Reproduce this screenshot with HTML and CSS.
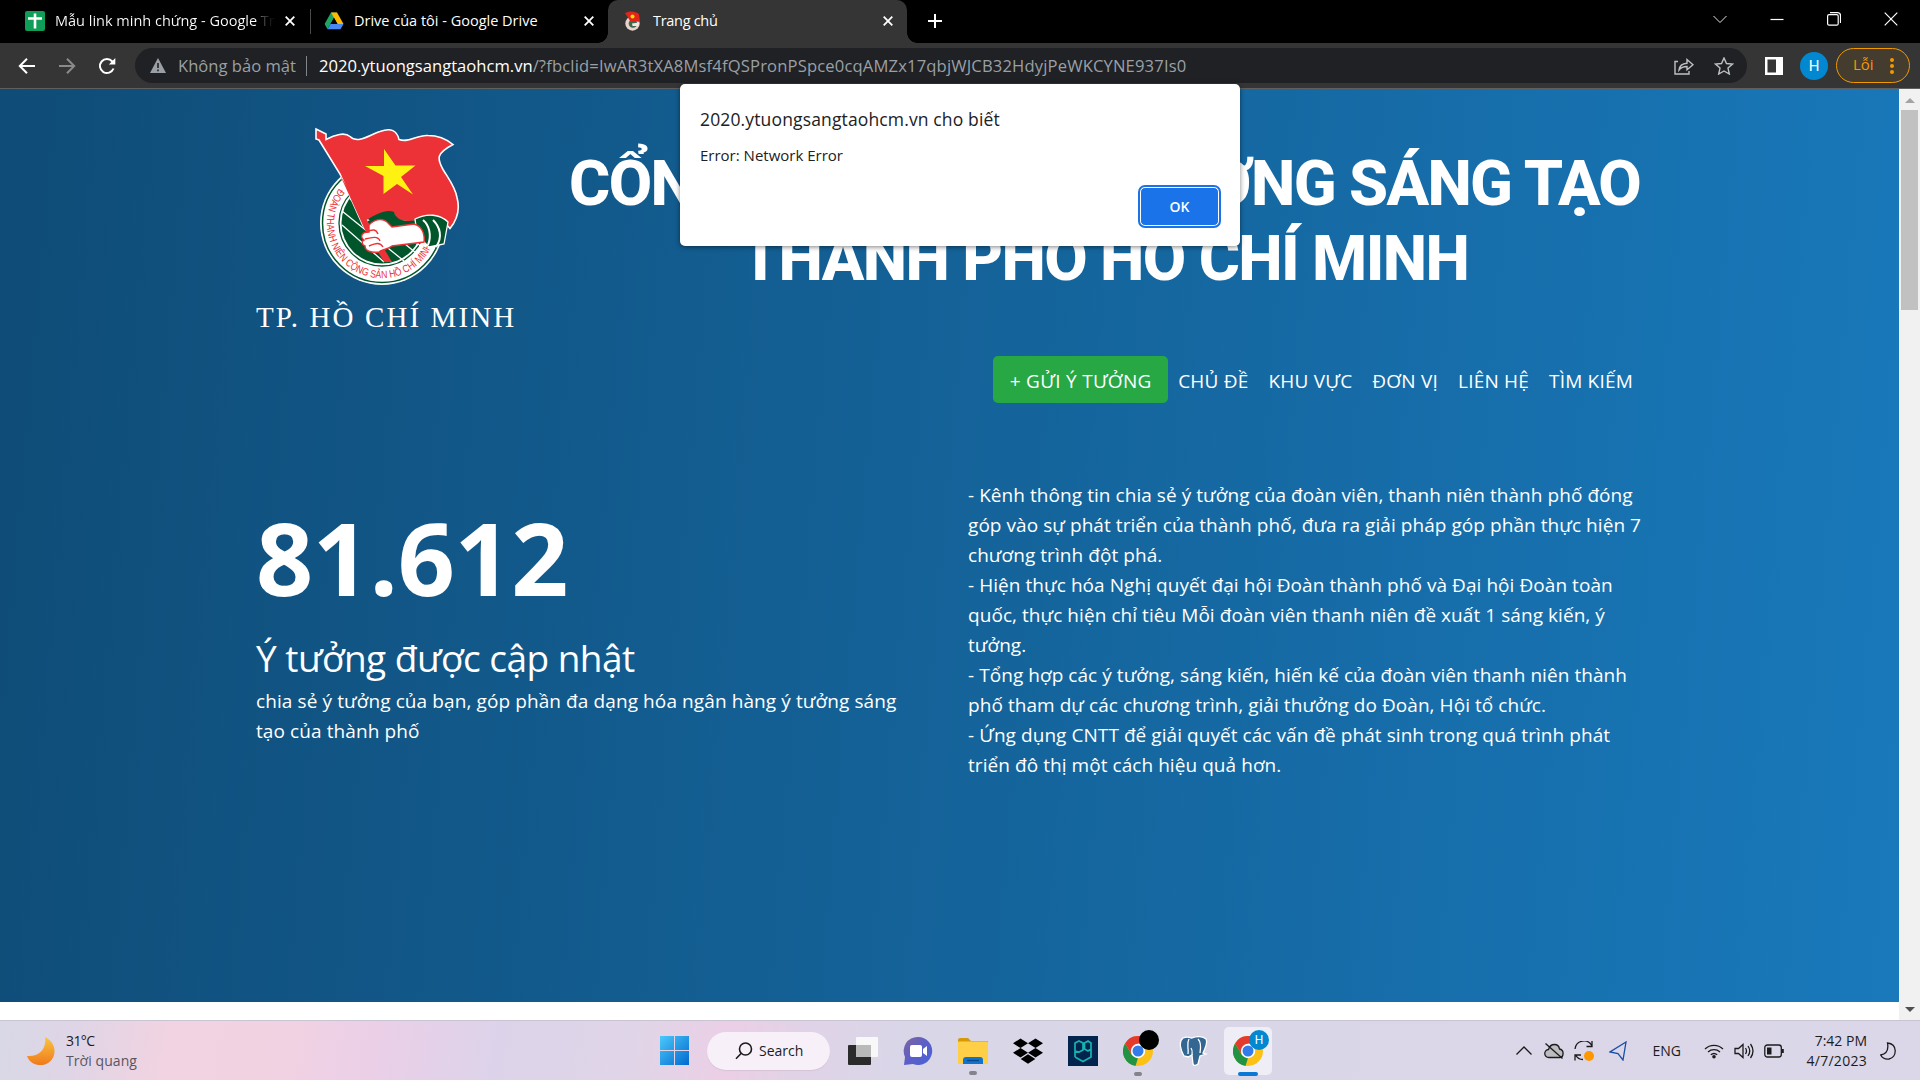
FILE: index.html
```
<!DOCTYPE html>
<html lang="vi">
<head>
<meta charset="utf-8">
<title>Trang chủ</title>
<link rel="stylesheet" href="styles.css">
</head>
<body>
<div class="screen">
  <div class="tabstrip">
    <div class="tab tab-first">
      <svg class="fav" viewBox="0 0 20 20"><rect width="20" height="20" rx="2" fill="#0f9d58"/><path d="M10 2.500v15M3 7.500h14" stroke="#fff" stroke-width="2.600"/></svg>
      <span class="tab-title fade">Mẫu link minh chứng - Google Tr</span>
      <svg class="x" viewBox="0 0 10 10"><path d="M.7.7l8.600 8.600M9.300.7L.7 9.300"/></svg>
    </div>
    <div class="tab tab-second">
      <svg class="fav" viewBox="0 0 20 20"><path d="M7 1.500h6L6.500 13 3.500 18.300.600 13z" fill="#1ea362"/><path d="M7 1.500h6L19.500 13h-6z" fill="#ffba00"/><path d="M6.500 13h13l-3 5.300h-13z" fill="#4688f4"/><path d="M10 7l3.400 6H6.600z" fill="#000"/></svg>
      <span class="tab-title">Drive của tôi - Google Drive</span>
      <svg class="x" viewBox="0 0 10 10"><path d="M.7.7l8.600 8.600M9.300.7L.7 9.300"/></svg>
    </div>
    <div class="tab tab-active">
      <svg class="fav" viewBox="0 0 20 20"><circle cx="9.500" cy="12.500" r="7.200" fill="#e9d3cd"/><circle cx="10" cy="12.500" r="4.300" fill="#3c6b4f"/><path d="M2 2C6-.5 13 0 16 3l1 8-5.500-1-4 .5z" fill="#e0261c"/><path d="M9 12.500l7-1-.5 3.500-6 0z" fill="#f7e6e0"/><circle cx="9.500" cy="5.500" r="2" fill="#ffd800"/></svg>
      <span class="tab-title tight">Trang chủ</span>
      <svg class="x" viewBox="0 0 10 10"><path d="M.7.7l8.600 8.600M9.300.7L.7 9.300"/></svg>
    </div>
    <svg class="newtab" viewBox="0 0 14 14"><path d="M7 0v14M0 7h14"/></svg>
    <div class="winctl">
      <svg class="thin" viewBox="0 0 14 14"><path d="M.5 4l6.500 6.500L13.500 4"/></svg>
      <svg viewBox="0 0 14 14"><path d="M.5 7.500h13"/></svg>
      <svg viewBox="0 0 14 14"><rect x=".6" y="2.600" width="10.600" height="10.600" rx="1.500"/><path d="M3 .7h7.500a3 3 0 0 1 3 3V11"/></svg>
      <svg viewBox="0 0 14 14"><path d="M.7.7l12.600 12.600M13.300.7L.7 13.300"/></svg>
    </div>
  </div>
  <div class="toolbar">
    <svg class="tb" viewBox="0 0 18 18"><path d="M17 9H2M9 1.800L1.800 9 9 16.200"/></svg>
    <svg class="tb dim" viewBox="0 0 18 18"><path d="M1 9h15M9 1.800L16.200 9 9 16.200"/></svg>
    <svg class="tb" viewBox="0 0 18 18"><path d="M15.500 11.500a7 7 0 1 1-1.200-7l1.500 1.800"/><path d="M17.300 1v6.500h-6.500z" fill="#fff" stroke="none"/></svg>
    <div class="omnibox">
      <svg class="warn" viewBox="0 0 16 15"><path d="M8 0l8 15H0z" fill="#9aa0a6"/><path d="M8 5v5M8 11.500v1.800" stroke="#202124" stroke-width="1.600"/></svg>
      <span>Không bảo mật</span>
      <i class="bar"></i>
      <span class="url"><b>2020.ytuongsangtaohcm.vn</b><span class="query">/?fbclid=IwAR3tXA8Msf4fQSPronPSpce0cqAMZx17qbjWJCB32HdyjPeWKCYNE937Is0</span></span>
      <svg class="ob" viewBox="0 0 20 18"><path d="M4 4.500H1V17h14v-3M5 13c.5-4 3-6.500 8-6.800V2.500L19 7.700l-6 5V9.500c-4 0-6 1-8 3.500z"/></svg>
      <svg class="ob" viewBox="0 0 20 18"><path d="M10 1l2.500 5.500 6 .6-4.500 4 1.300 5.900L10 14l-5.300 3L6 11.100l-4.500-4 6-.6z"/></svg>
    </div>
    <svg class="panel" viewBox="0 0 18 18"><rect width="18" height="18" fill="#fff"/><rect x="2.500" y="2.500" width="8.500" height="13" fill="#353535"/></svg>
    <span class="avatar">H</span>
    <span class="err"><span>Lỗi</span><i></i></span>
  </div>
  <div class="viewport">
    <main class="page">
      <section class="hero">
        <header class="head">
          <div class="logo">
            <svg class="emblem" viewBox="0 0 146 162">
              <circle cx="67" cy="96" r="62" fill="#fff"/>
              <circle cx="67" cy="96" r="59.500" fill="none" stroke="#00552b" stroke-width="1.500"/>
              <circle cx="67" cy="96" r="43" fill="none" stroke="#00552b" stroke-width="1.300"/>
              <circle cx="67" cy="96" r="40.500" fill="#00552b"/>
              <path d="M27 84l62 50M27 98l42 37M35 72l66 54M62 85l50 39M88 80l22 18" stroke="#fff" stroke-width="1.300"/>
              <path id="arc" d="M24.300 61.400A55 55 0 1 0 117.600 117.500" fill="none"/>
              <text class="ringtext"><textPath href="#arc" startOffset="0" textLength="187" lengthAdjust="spacingAndGlyphs">ĐOÀN THANH NIÊN CỘNG SẢN HỒ CHÍ MINH</textPath></text>
              <path d="M1 2l10 5v5.500c9-5 19-7.500 24-3 8 8 20-2 30-5 11-4 17-1 19 8 10 4 18-5 29-4 10 0 19 4 25 9-17 9-16 14-10 25 6 10 12 17 14 28 3 11 1 21-7 31-5-7-12-11-21-10-9 1-17 5-24 3-8 0-10-3-11-7-8-4-17 2-27 6l-2 6 6 10-8-11L25 47 4 13 1 12z" fill="#ec3237" stroke="#fff" stroke-width="1.600"/>
              <path d="M53 92c9-5 18-10 26-7 2 7 8 9 15 9l8-1v5l-21 3-22-4z" fill="#00552b"/>
              <path d="M69 22l11.500 16.500h20L86 50l12 17.500L82 57 68.500 67V49L50 39h19z" fill="#fff112"/>
              <path d="M25 48l52 87h-8L50 103z" fill="#ec3237"/>
              <path d="M100 92c12-6 25-5 33 3l-4 22-15 3-4-4-8-10z" fill="#00552b" stroke="#fff" stroke-width="1.300"/>
              <path d="M108 93c6 5 9 15 5 25M118 93c7 7 10 17 3 27" fill="none" stroke="#fff" stroke-width="2"/>
              <path d="M54 98c6-6 14-8 20-1l3 3 22-3c8 2 11 10 10 18l-32 4c-5 4-10 3-13 6-8 1-14-1-14-6-4-2-3-5-1-6-4-3-3-8 5-8z" fill="#fff" stroke="#ec3237" stroke-width="1.400"/>
              <path d="M51 105c7-3 10-3 12 2M50 112c8-2 13-3 15 2M54 119c7-3 11-4 14 1" fill="none" stroke="#ec3237" stroke-width="1.400"/>
            </svg>
            <div class="city">TP. HỒ CHÍ MINH</div>
          </div>
          <h1 class="title">CỔNG THÔNG TIN Ý TƯỞNG SÁNG TẠO<br>THÀNH PHỐ HỒ CHÍ MINH</h1>
        </header>
        <nav class="nav">
          <a class="send">+ GỬI Ý TƯỞNG</a>
          <a>CHỦ ĐỀ</a><a>KHU VỰC</a><a>ĐƠN VỊ</a><a>LIÊN HỆ</a><a>TÌM KIẾM</a>
        </nav>
        <div class="cols">
          <div class="stat">
            <div class="num">81.612</div>
            <h2>Ý tưởng được cập nhật</h2>
            <p>chia sẻ ý tưởng của bạn, góp phần đa dạng hóa ngân hàng ý tưởng sáng<br>tạo của thành phố</p>
          </div>
          <div class="about">- Kênh thông tin chia sẻ ý tưởng của đoàn viên, thanh niên thành phố đóng<br>góp vào sự phát triển của thành phố, đưa ra giải pháp góp phần thực hiện 7<br>chương trình đột phá.<br>- Hiện thực hóa Nghị quyết đại hội Đoàn thành phố và Đại hội Đoàn toàn<br>quốc, thực hiện chỉ tiêu Mỗi đoàn viên thanh niên đề xuất 1 sáng kiến, ý<br>tưởng.<br>- Tổng hợp các ý tưởng, sáng kiến, hiến kế của đoàn viên thanh niên thành<br>phố tham dự các chương trình, giải thưởng do Đoàn, Hội tổ chức.<br>- Ứng dụng CNTT để giải quyết các vấn đề phát sinh trong quá trình phát<br>triển đô thị một cách hiệu quả hơn.</div>
        </div>
      </section>
    </main>
    <div class="scroll"><i class="up"></i><i class="thumb"></i><i class="down"></i></div>
  </div>
  <footer class="taskbar">
    <div class="weather">
      <svg viewBox="0 0 28 28"><defs><linearGradient id="mn" x2="0" y2="1"><stop offset="0" stop-color="#f9c440"/><stop offset="1" stop-color="#f07a1c"/></linearGradient></defs><path d="M18 0c13 6 13 24-2 28C8 29 2 25 0 19 12 20 20 12 18 0z" fill="url(#mn)"/></svg>
      <div><div class="temp">31°C</div><div class="sub">Trời quang</div></div>
    </div>
    <div class="apps">
      <svg class="win" viewBox="0 0 29 29"><defs><linearGradient id="wg" x2="1" y2="1"><stop offset="0" stop-color="#4cc9fb"/><stop offset="1" stop-color="#0069cf"/></linearGradient></defs><path d="M0 0h14v14H0zM15 0h14v14H15zM0 15h14v14H0zM15 15h14v14H15z" fill="url(#wg)"/></svg>
      <div class="search"><svg viewBox="0 0 18 18"><circle cx="10.500" cy="7" r="6" /><path d="M6.300 11.300L1 16.800"/></svg><span>Search</span></div>
      <svg class="app" viewBox="0 0 30 28"><rect y="8" width="23" height="20" rx="1" fill="#2b2b2b"/><rect x="8" width="22" height="20" rx="1" fill="#f8f8f8"/><rect x="8" y="8" width="15" height="12" fill="#b8b9b8"/></svg>
      <svg class="app" viewBox="0 0 30 28"><defs><linearGradient id="ch" x2="1" y2="1"><stop offset="0" stop-color="#80659f"/><stop offset=".5" stop-color="#5b5fc7"/><stop offset="1" stop-color="#4a62d8"/></linearGradient></defs><path d="M15 0a14 14 0 1 1-5 27l-9 1 1-8A14 14 0 0 1 15 0z" fill="url(#ch)"/><rect x="7" y="8" width="12" height="12" rx="2" fill="#fff"/><path d="M20 12l4-3v10l-4-3z" fill="#fff"/></svg>
      <div class="slot"><svg class="app" viewBox="0 0 30 28"><path d="M0 3q0-2 2-2h8l3 3h17v22H0z" fill="#d59a05"/><rect y="4.500" width="30" height="22.500" rx="1" fill="#ffcf48"/><path d="M5 27v-4q0-3 3-3h14q3 0 3 3v4z" fill="#1173cb"/><path d="M9 23.500h12" stroke="#0a4a8a" stroke-width="1.500"/></svg><i class="run"></i></div>
      <svg class="app" viewBox="0 0 30 28"><path d="M7.500 1.500l7.500 4.800-7.500 4.800L0 6.300zM22.500 1.500L30 6.300l-7.500 4.800L15 6.300zM7.500 11l7.500 4.800-7.500 4.800L0 15.800zM22.500 11l7.500 4.800-7.500 4.800-7.500-4.800zM15 17.300l7.300 4.700-7.300 4.700L7.700 22z"/></svg>
      <svg class="app pg" viewBox="0 0 30 30"><rect width="30" height="30" fill="#03244d"/><path d="M7 21V7l4-2 4 2v7l-4 2-4-1M23 13l-3 2-3.500-2V7L20 5l3 2v14l-8 4.500L7 21" fill="none" stroke="#16b3b3" stroke-width="1.700"/></svg>
      <div class="slot"><svg class="app pg" viewBox="0 0 30 30"><circle cx="15" cy="15" r="15" fill="#fbc116"/><path d="M2 7.500L9 19l6 3-2.500 8A15 15 0 0 1 2 7.500z" fill="#229342"/><path d="M2 7.500A15 15 0 0 1 28 7.500H15L9 19z" fill="#e33b2e"/><circle cx="15" cy="15" r="7.200" fill="#fff"/><circle cx="15" cy="15" r="5.500" fill="#327bea"/></svg><b class="badge black"></b><i class="run"></i></div>
      <svg class="app pg" viewBox="0 0 30 30"><path d="M5 2c5-2 8 0 9 0 5-2 11-2 14 1 2 4-1 10-3 14l3 1-6 2-2 8q-4 3-5 0l-1-9-4 2-4-1C3 15 0 6 5 2z" fill="#336791" stroke="#fff" stroke-width="1.300"/><path d="M11 3c-3 5 0 8-1 15M20 3c3 3 3 8 2 14M13 12c2 3 1 5 1 7" fill="none" stroke="#fff" stroke-width="1.300"/></svg>
      <div class="slot active"><svg class="app pg" viewBox="0 0 30 30"><circle cx="15" cy="15" r="15" fill="#fbc116"/><path d="M2 7.500L9 19l6 3-2.500 8A15 15 0 0 1 2 7.500z" fill="#229342"/><path d="M2 7.500A15 15 0 0 1 28 7.500H15L9 19z" fill="#e33b2e"/><circle cx="15" cy="15" r="7.200" fill="#fff"/><circle cx="15" cy="15" r="5.500" fill="#327bea"/></svg><b class="badge">H</b><i class="run on"></i></div>
    </div>
    <div class="tray">
      <svg class="t1" viewBox="0 0 16 9"><path d="M.5 8.500L8 1l7.500 7.500"/></svg>
      <svg class="t2" viewBox="0 0 20 16"><path d="M5 14.500a4 4 0 0 1-.5-8C5.500 3 8 1.500 10.500 1.500S15 3 15.500 6c5 1 4.500 8.500 0 8.500z" fill="#bdbdc0"/><path d="M1.500.500l17 15"/></svg>
      <svg class="t3" viewBox="0 0 20 20"><path d="M1 8a9 9 0 0 1 17-3M18 0v5.500h-5.500M9 18.500q-5 0-7.500-4.500M1 19.500V14h6"/><circle cx="15" cy="15" r="5" fill="#ff9800" stroke="none"/></svg>
      <svg class="t4" viewBox="0 0 18 20"><path d="M17 1L1 11l8 1.500 5 6.500z"/></svg>
      <span>ENG</span>
      <svg class="t5" viewBox="0 0 20 16"><path d="M1 6a13 13 0 0 1 18 0M4 9a9 9 0 0 1 12 0M6.800 11.800a5 5 0 0 1 6.400 0"/><circle cx="10" cy="13.700" r="1.800" fill="#1b1b1b" stroke="none"/></svg>
      <svg class="t6" viewBox="0 0 20 16"><path d="M1 5.500v5h3.500L9 14.500v-13L4.500 5.500zM11.500 5q2 3 0 6M14 3q3.500 5 0 10M16.500 1q5 7 0 14"/></svg>
      <svg class="t7" viewBox="0 0 20 14"><rect x=".8" y="1" width="16.500" height="12" rx="2.500"/><path d="M3 3.500h4.500v7H3z" fill="#1b1b1b" stroke="none"/><path d="M18.800 5v4" stroke-width="2"/></svg>
      <div class="clock"><div>7:42 PM</div><div class="date">4/7/2023</div></div>
      <svg class="t8" viewBox="0 0 16 18"><path d="M7.500 1c10 1 10 14 1.500 16-4 .5-7-1.500-8.300-4C6 12 9 9 7.500 1z"/></svg>
    </div>
  </footer>
  <div class="dialog" role="dialog">
    <div class="d-title">2020.ytuongsangtaohcm.vn cho biết</div>
    <div class="d-msg">Error: Network Error</div>
    <button class="ok">OK</button>
  </div>
</div>
</body>
</html>
```
FILE: styles.css
```
* { box-sizing: border-box; }
body { margin: 0; font-family: "Open Sans", "Noto Sans", sans-serif; }
svg { display: block; fill: none; flex: none; }
.screen { position: relative; width: 1920px; height: 1080px; display: flex; flex-direction: column; overflow: hidden; }

.tabstrip { height: 43px; background: #000; display: flex; align-items: center; color: #fff; font-size: 14.5px; flex: none; }
.tab { display: flex; align-items: center; height: 43px; padding-bottom: 2px; white-space: nowrap; }
.tab-first { width: 310px; padding-left: 25px; padding-right: 15px; }
.tab-second { width: 298px; padding-left: 14px; padding-right: 14px; position: relative; }
.tab-second::before { content: ""; position: absolute; left: 0; top: 9px; width: 1px; height: 25px; background: #4a4a4a; }
.tab-active { position: relative; width: 299px; padding-left: 15px; padding-right: 14px; background: #353535; border-radius: 10px 10px 0 0; }
.tab-active::before, .tab-active::after { content: ""; position: absolute; bottom: 0; width: 10px; height: 10px; }
.tab-active::before { left: -10px; background: radial-gradient(circle at 0 0, #000 9.5px, #353535 10px); }
.tab-active::after { right: -10px; background: radial-gradient(circle at 100% 0, #000 9.5px, #353535 10px); }
.fav { width: 20px; height: 20px; margin-right: 10px; }
.tab-title { flex: 1; min-width: 0; }
.tight { letter-spacing: -.3px; }
.fade { background: linear-gradient(90deg, #fff 202px, #555 207px, #111 217px); -webkit-background-clip: text; background-clip: text; color: transparent; }
.x { width: 10px; height: 10px; stroke: #fff; stroke-width: 1.8; }
.newtab { width: 14px; height: 14px; margin: 0 0 2px 21px; stroke: #fff; stroke-width: 2; }
.winctl { margin-left: auto; display: flex; gap: 43px; padding: 0 22px 6px 0; }
.winctl svg { width: 14px; height: 14px; stroke: #fff; stroke-width: 1.2; }
.winctl .thin { stroke-width: .9; }

.toolbar { height: 46px; background: #353535; border-bottom: 1px solid #5f5f5f; display: flex; align-items: center; padding: 0 10px 0 18px; flex: none; }
.tb { width: 18px; height: 18px; margin-right: 22px; stroke: #fff; stroke-width: 2; }
.tb.dim { stroke: #8a8a8a; }
.omnibox { margin-left: -3px; width: 1612px; height: 35px; border-radius: 18px; background: #202124; display: flex; align-items: center; padding: 0 13px 0 15px; color: #9aa0a6; font-size: 16.6px; white-space: nowrap; }
.warn { width: 16px; height: 15px; margin-right: 12px; }
.bar { width: 1px; height: 20px; background: #80868b; margin: 0 12px 0 10px; }
.url b { font-weight: 400; color: #fff; }
.url { flex: 1; }
.query { letter-spacing: .15px; }
.ob { width: 20px; height: 18px; margin-left: 20px; stroke: #bdc1c6; stroke-width: 1.4; }
.panel { width: 18px; height: 18px; margin-left: 18px; }
.avatar { width: 28px; height: 28px; border-radius: 50%; background: #0288d1; color: #fff; font: 15px/28px Roboto, sans-serif; text-align: center; margin-left: 17px; }
.err { width: 74px; height: 35px; margin-left: 8px; border: 1.5px solid #f29900; border-radius: 18px; background: #453c30; color: #f29900; font: 15px/30px "Open Sans", sans-serif; display: flex; align-items: center; justify-content: space-between; padding: 0 15px 3px 16px; }
.err i { width: 4px; height: 4px; margin-top: 3px; border-radius: 50%; background: #f29900; box-shadow: 0 -6px #f29900, 0 6px #f29900; }

.viewport { height: 931px; display: flex; flex: none; }
.page { flex: 1; min-width: 0; background: #fff; }
.hero { height: 913px; background: linear-gradient(95deg, #0f4c77, #1979bb); color: #fff; padding: 38px 259px 0 256px; }
.head { display: flex; height: 229px; }
.logo { width: 313px; flex: none; }
.emblem { width: 146px; height: 162px; margin-left: 59px; }
.ringtext { font: 10.5px "Liberation Sans", sans-serif; fill: #ec3237; }
.city { font: 29px/36px "Liberation Serif", serif; white-space: nowrap; letter-spacing: 2.1px; margin-top: 10px; }
.title { margin: 19px 0 0; flex: 1; min-width: 0; text-align: center; font: 800 63px/75px Roboto, sans-serif; letter-spacing: -1.65px; white-space: nowrap; }
.nav { display: flex; justify-content: flex-end; align-items: center; height: 47px; gap: 20px; font-size: 19px; letter-spacing: .2px; white-space: nowrap; padding: 0 7px 0 0; }
.nav a { line-height: 47px; padding-top: 4px; }
.nav .send { height: 47px; width: 175px; padding-top: 2px; letter-spacing: .3px; text-align: center; background: #28a745; border-radius: 5px; margin-right: -10px; }
.cols { display: flex; justify-content: space-between; font-size: 19px; letter-spacing: .1px; line-height: 30px; white-space: nowrap; padding-top: 77px; }
.num { font-size: 100px; font-weight: 700; line-height: 120px; padding-top: 17px; letter-spacing: -.4px; }
h2 { margin: 17px 0 0; font-size: 37px; font-weight: 400; line-height: 48px; letter-spacing: -.53px; }
.stat p { margin: 4px 0 0; }
.about { width: 672px; letter-spacing: .06px; }
.scroll { width: 21px; background: #f1f1f1; display: flex; flex-direction: column; align-items: center; padding: 9px 0 8px; }
.scroll .up { border: 5px solid transparent; border-top: 0; border-bottom-color: #a3a3a3; }
.scroll .thumb { width: 17px; height: 200px; background: #c1c1c1; margin-top: 7px; }
.scroll .down { border: 5px solid transparent; border-bottom: 0; border-top-color: #505050; margin-top: auto; }

.taskbar { height: 60px; display: flex; align-items: center; border-top: 1px solid #c9c4d3; background: linear-gradient(100deg, #d8d8e6 0, #dfd5e6 4%, #f2d3e1 9%, #f1d2e2 15%, #eacfe8 20%, #dcd3ea 26%, #e0d5e8 33%, #ebcfe6 38%, #e0d3e7 42%, #d9d6e8 47%, #dbd7e8 100%); color: #1b1b1b; font-size: 14px; line-height: 20px; }
.weather { display: flex; width: 660px; padding-left: 27px; gap: 11px; align-items: center; }
.weather svg { width: 28px; height: 28px; }
.temp { letter-spacing: -.6px; }
.sub { color: #5a5560; letter-spacing: .07px; }
.apps { display: flex; align-items: center; }
.win { width: 29px; height: 29px; }
.search { width: 123px; height: 38px; margin-left: 18px; border-radius: 19px; background: #f7f0f8; display: flex; align-items: center; padding-left: 28px; gap: 6px; margin-right: 18px; box-shadow: 0 1px 1px #d5c3d5; }
.search svg { width: 18px; height: 18px; stroke: #1b1b1b; stroke-width: 1.6; }
.app { width: 30px; height: 28px; margin-right: 25px; fill: #000; }
.pg { height: 30px; }
.slot { position: relative; }
.run { position: absolute; left: 11px; bottom: -10px; width: 8px; height: 4px; border-radius: 2px; background: #85828c; }
.run.on { width: 20px; left: 5px; background: #0a78d4; }
.badge { position: absolute; left: 16px; top: -6px; width: 20px; height: 20px; border-radius: 50%; background: #0288d1; color: #fff; font: 12px/20px Roboto, sans-serif; text-align: center; }
.badge.black { background: #000; }
.active::before { content: ""; position: absolute; left: -9px; top: -9px; width: 48px; height: 48px; border-radius: 5px; background: #efedf5; }
.active svg { position: relative; }
.tray { margin-left: auto; display: flex; align-items: center; padding-right: 24px; }
.tray svg { stroke: #1b1b1b; stroke-width: 1.3; }
.t1 { width: 16px; height: 9px; margin-right: 12px; }
.t2 { width: 20px; height: 16px; margin-right: 10px; }
.t3 { width: 20px; height: 20px; margin-right: 15px; }
.tray .t4 { width: 18px; height: 20px; margin-right: 26px; stroke: #174ea6; }
.t5 { width: 20px; height: 16px; margin-left: 23px; margin-right: 10px; }
.t6 { width: 20px; height: 16px; margin-right: 10px; }
.t7 { width: 20px; height: 14px; margin-right: 22px; }
.clock { text-align: right; width: 61px; margin-right: 13px; }
.date { letter-spacing: .28px; }
.t8 { width: 16px; height: 18px; }

.dialog { position: absolute; left: 680px; top: 84px; width: 560px; height: 162px; background: #fff; border-radius: 5px; box-shadow: 0 1px 5px rgba(0,0,0,.5); padding: 22px 21px 0 20px; color: #202124; white-space: nowrap; }
.d-title { font-size: 17.5px; line-height: 26px; letter-spacing: .14px; }
.d-msg { font-size: 15px; line-height: 20px; margin-top: 13px; }
.ok { display: block; margin: 22px 0 0 auto; width: 79px; height: 39px; border: 1.5px solid #fff; outline: 2px solid #1a73e8; border-radius: 5px; background: #1a73e8; color: #fff; font: 600 14px "Open Sans", sans-serif; }
```
